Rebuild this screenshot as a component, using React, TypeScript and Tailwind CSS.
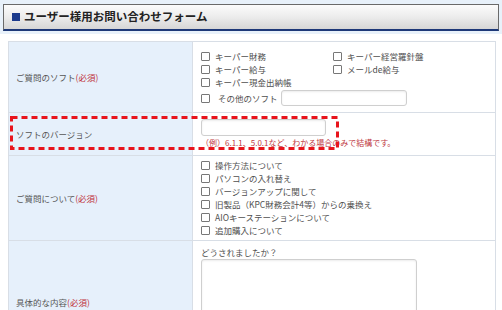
import React from "react";

const softs: [string, string | null][] = [
  ["キーパー財務", "キーパー経営羅針盤"],
  ["キーパー給与", "メールde給与"],
  ["キーパー現金出納帳", null],
];

const topics = [
  "操作方法について",
  "パソコンの入れ替え",
  "バージョンアップに関して",
  "旧製品（KPC財務会計4等）からの乗換え",
  "AIOキーステーションについて",
  "追加購入について",
];

function Box() {
  return <span className="inline-block w-[9px] h-[9px] shrink-0 border border-[#777] rounded-[1px] bg-white" />;
}

function Check({ label }: { label: string }) {
  return (
    <div className="flex items-center gap-[5px] h-[13px]">
      <Box />
      <span>{label}</span>
    </div>
  );
}

function Label({ text, required }: { text: string; required?: boolean }) {
  return (
    <div className="w-[184px] shrink-0 bg-[#e6f0fb] border-r border-[#d8dee6] flex items-center pl-[7px] text-[#555]">
      {text}
      {required && <span className="text-[#c0303a]">(必須)</span>}
    </div>
  );
}

export default function App() {
  return (
    <div className="relative w-[502px] h-[310px] overflow-hidden bg-white text-[8.5px] leading-[13px] text-[#4f4f4f] font-['Noto_Sans_CJK_JP',sans-serif]">
      {/* Title bar */}
      <div className="bg-[#e8f1fa] px-[3px] pt-[4px] pb-[3px]">
        <div className="h-[27px] flex items-center pl-[8px] border border-[#6a6a6a] border-b-[2px] border-b-[#1d3878] bg-gradient-to-b from-[#fcfcfc] via-[#ececec] to-[#d6d6d6]">
          <span className="w-[8px] h-[8px] bg-[#1c3a8c]" />
          <span className="ml-[4px] text-[11.5px] font-bold text-[#222] leading-none">ユーザー様用お問い合わせフォーム</span>
        </div>
      </div>

      {/* Form table */}
      <div className="ml-[8px] mt-[7px] w-[488px] border border-[#d8dee6]">
        <div className="flex h-[71px] border-b border-[#d8dee6]">
          <Label text="ご質問のソフト" required />
          <div className="flex-1 pl-[8px] pt-[8px]">
            {softs.map(([a, b]) => (
              <div key={a} className="flex">
                <div className="w-[132px]">
                  <Check label={a} />
                </div>
                {b && <Check label={b} />}
              </div>
            ))}
            <div className="flex items-center mt-[1px] h-[16px]">
              <Box />
              <span className="ml-[8px] w-[63px]">その他のソフト</span>
              <input readOnly className="w-[126px] h-[16px] border border-[#cfcfcf] rounded-[3px] bg-white shadow-[inset_0_1px_2px_rgba(0,0,0,0.08)]" />
            </div>
          </div>
        </div>

        <div className="flex h-[43px] border-b border-[#d8dee6]">
          <Label text="ソフトのバージョン" />
          <div className="flex-1 pl-[8px] pt-[6px]">
            <input readOnly className="block w-[125px] h-[17px] border border-[#cfcfcf] rounded-[3px] bg-white shadow-[inset_0_1px_2px_rgba(0,0,0,0.08)]" />
            <p className="mt-[2px] text-[8px] leading-[10px] text-[#c0393f]">（例）6.1.1、5.0.1など、わかる場合のみで結構です。</p>
          </div>
        </div>

        <div className="flex h-[85px] border-b border-[#d8dee6]">
          <Label text="ご質問について" required />
          <div className="flex-1 pl-[8px] pt-[3px]">
            {topics.map((t) => (
              <Check key={t} label={t} />
            ))}
          </div>
        </div>

        <div className="flex h-[122px]">
          <Label text="具体的な内容" required />
          <div className="flex-1 pl-[8px] pt-[5px]">
            <p>どうされましたか？</p>
            <textarea readOnly className="block w-[216px] h-[97px] border border-[#cfcfcf] rounded-[3px] bg-white resize-none shadow-[inset_0_1px_2px_rgba(0,0,0,0.08)]" />
          </div>
        </div>
      </div>

      {/* Red annotation outline */}
      <svg className="absolute left-[10px] top-[116px]" width="329" height="34" viewBox="0 0 329 34">
        <rect x="1.5" y="1.5" width="326" height="31" fill="none" stroke="#e8141c" strokeWidth="3" strokeDasharray="6 4" />
      </svg>
    </div>
  );
}
